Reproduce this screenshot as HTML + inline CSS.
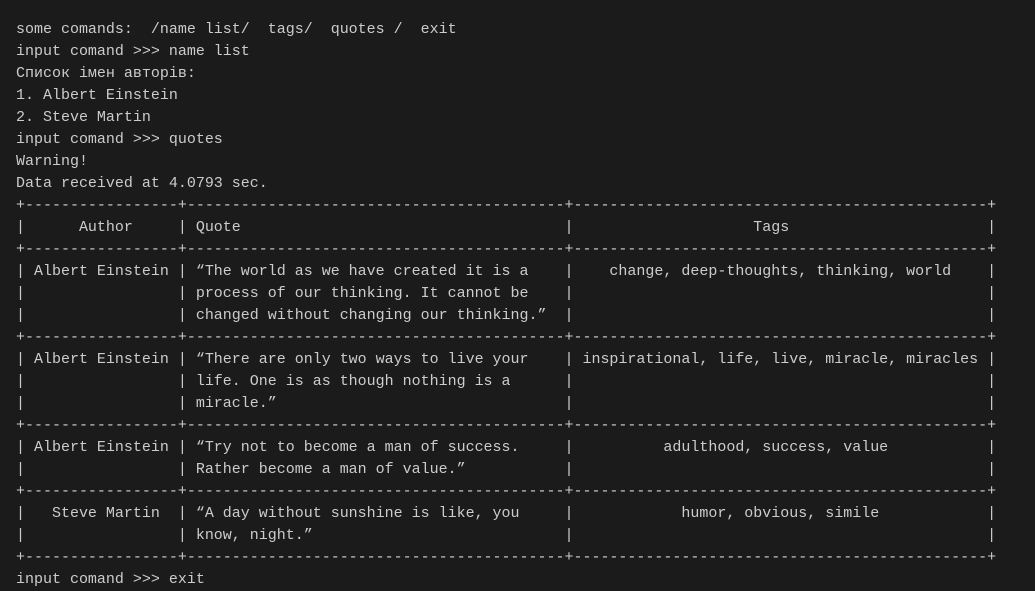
<!DOCTYPE html>
<html><head><meta charset="utf-8">
<style>
html,body{margin:0;padding:0;background:#1b1b1b;width:1035px;height:590px;overflow:hidden}
pre{margin:0;position:absolute;left:16px;top:19px;font-family:"Liberation Mono","DejaVu Sans Mono",monospace;font-size:15px;line-height:22px;color:#cccccc;letter-spacing:-0.01px}
</style></head><body>
<pre>some comands:  /name list/  tags/  quotes /  exit
input comand &gt;&gt;&gt; name list
Список імен авторів:
1. Albert Einstein
2. Steve Martin
input comand &gt;&gt;&gt; quotes
Warning!
Data received at 4.0793 sec.
+-----------------+------------------------------------------+----------------------------------------------+
|      Author     | Quote                                    |                    Tags                      |
+-----------------+------------------------------------------+----------------------------------------------+
| Albert Einstein | “The world as we have created it is a    |    change, deep-thoughts, thinking, world    |
|                 | process of our thinking. It cannot be    |                                              |
|                 | changed without changing our thinking.”  |                                              |
+-----------------+------------------------------------------+----------------------------------------------+
| Albert Einstein | “There are only two ways to live your    | inspirational, life, live, miracle, miracles |
|                 | life. One is as though nothing is a      |                                              |
|                 | miracle.”                                |                                              |
+-----------------+------------------------------------------+----------------------------------------------+
| Albert Einstein | “Try not to become a man of success.     |          adulthood, success, value           |
|                 | Rather become a man of value.”           |                                              |
+-----------------+------------------------------------------+----------------------------------------------+
|   Steve Martin  | “A day without sunshine is like, you     |            humor, obvious, simile            |
|                 | know, night.”                            |                                              |
+-----------------+------------------------------------------+----------------------------------------------+
input comand &gt;&gt;&gt; exit</pre>
</body></html>
